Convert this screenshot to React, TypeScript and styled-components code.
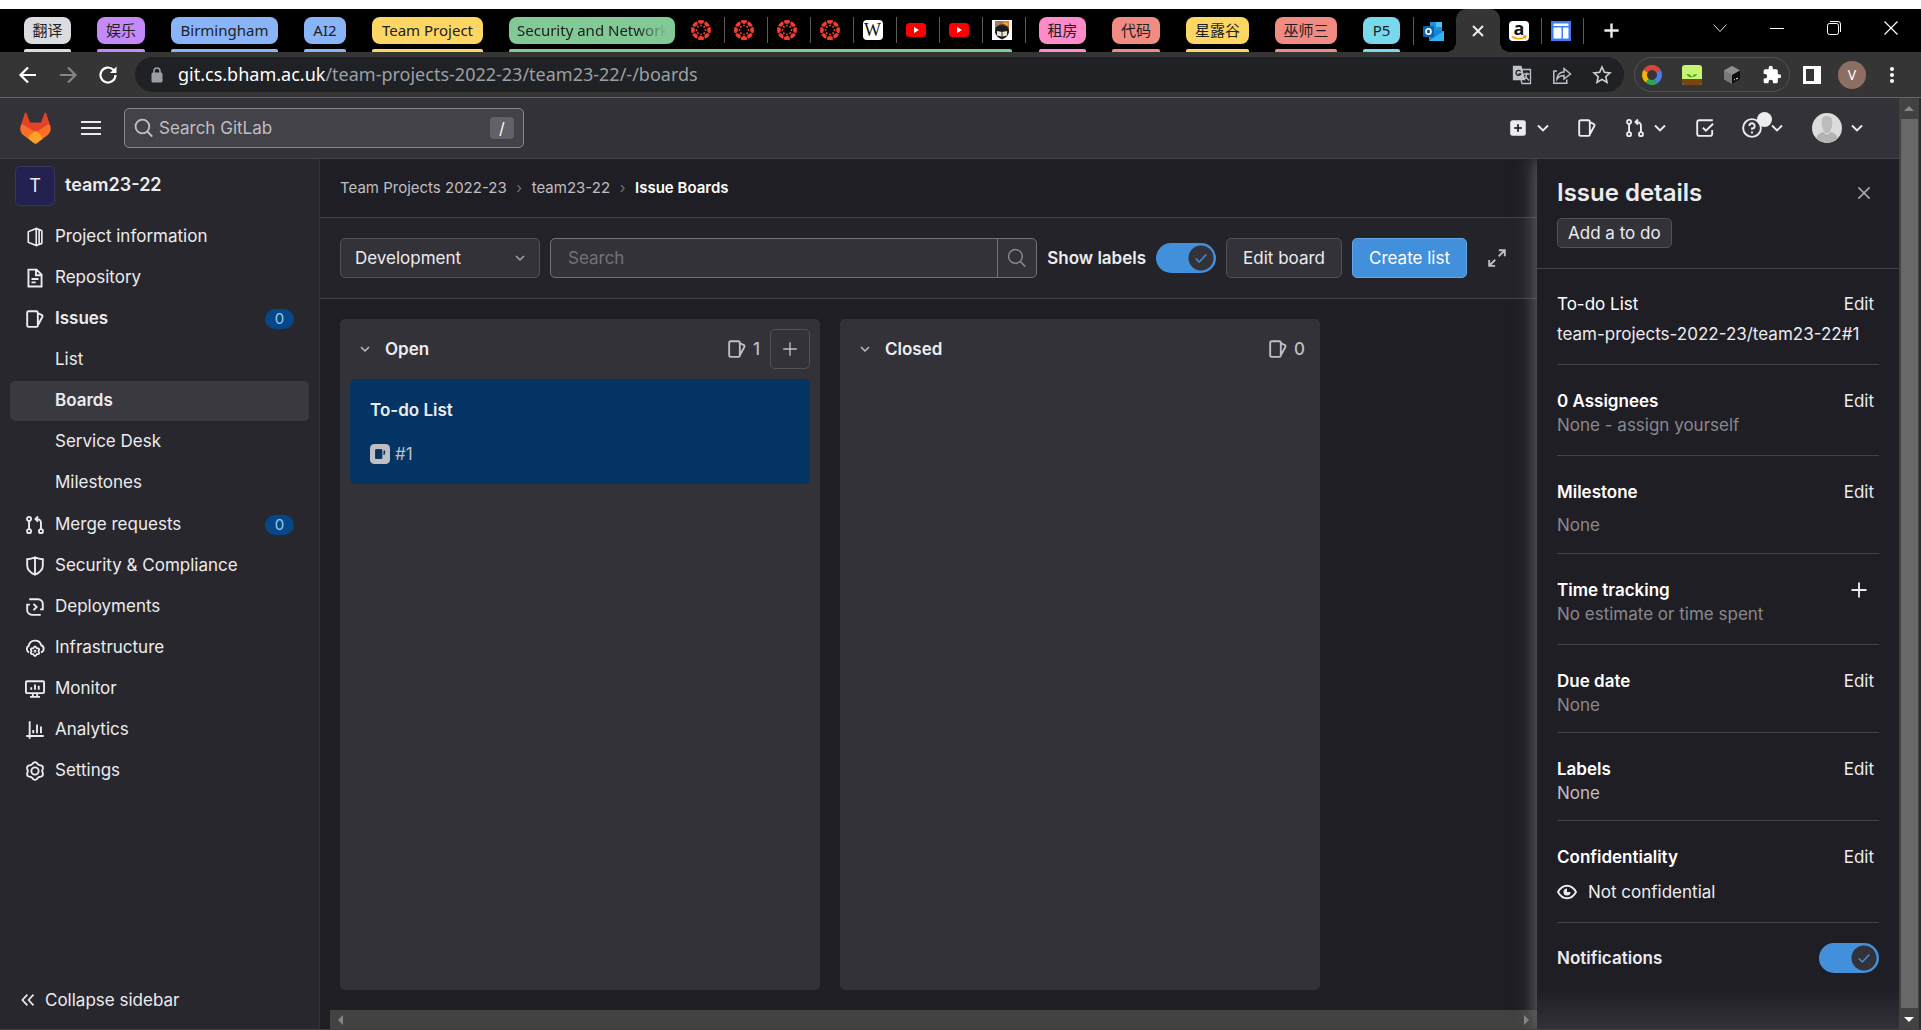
import React from "react";
import styled, { createGlobalStyle, css } from "styled-components";

const GlobalStyle = createGlobalStyle`
  *, *::before, *::after { box-sizing: border-box; }
  body { margin: 0; background: #1f1e24; }
  button, input, select { font: inherit; color: inherit; margin: 0; }
  button { border: 0; background: none; padding: 0; cursor: pointer; }
  a { color: inherit; text-decoration: none; }
  ul, ol { list-style: none; margin: 0; padding: 0; }
  h1, h2, h3, p { margin: 0; font-weight: inherit; font-size: inherit; }
  svg { display: block; flex: none; }
`;

const uiFont = `"Noto Sans", "Noto Sans CJK SC", sans-serif`;
const appFont = `Inter, "Noto Sans", sans-serif`;

const Screen = styled.div`
  display: flex;
  flex-direction: column;
  height: 100vh;
  overflow: hidden;
  color: #ececef;
  font: 17px/24px ${appFont};
  border-top: 9px solid #fff;
  border-bottom: 1px solid #3c4043;
`;

/* ---------- browser ---------- */

const TabStrip = styled.div`
  display: flex;
  height: 43px;
  flex: none;
  padding-left: 24px;
  background: #000;
  font: 15px/27px ${uiFont};
`;

const GroupList = styled.div<{ $offset?: number }>`
  display: flex;
  gap: 26px;
  margin-left: ${(p) => p.$offset ?? 0}px;
`;

const Group = styled.div`
  display: flex;
  flex-direction: column;
  justify-content: space-between;
  padding-top: 8px;
`;

const GroupRow = styled.div`
  display: flex;
`;

const GroupChip = styled.button<{ $color: string; $width: number; $fade?: boolean }>`
  width: ${(p) => p.$width}px;
  height: 27px;
  padding: 0 8px;
  border-radius: 8px;
  background: ${(p) => p.$color};
  color: #202124;
  line-height: 27px;
  white-space: nowrap;
  overflow: hidden;
  text-align: ${(p) => (p.$fade ? "left" : "center")};
  span {
    display: block;
    overflow: hidden;
    ${(p) => p.$fade && css`mask-image: linear-gradient(90deg, #000 80%, transparent);`}
  }
`;

const GroupLine = styled.div<{ $color: string; $inset?: number }>`
  height: 3px;
  margin-right: ${(p) => p.$inset ?? 0}px;
  border-radius: 2px 2px 0 0;
  background: ${(p) => p.$color};
`;

const FaviconRow = styled.div`
  display: flex;
  margin-left: 7px;
`;

const FaviconTab = styled.button`
  display: flex;
  align-items: center;
  justify-content: center;
  width: 43px;
  height: 26px;
  padding-right: 5px;
  border-right: 1px solid #5a5a5a;
`;

const LooseTabs = styled.div<{ $first?: boolean }>`
  display: flex;
  padding-top: 9px;
  margin-left: ${(p) => (p.$first ? 13 : 0)}px;
  ${(p) => p.$first && css`border-left: 1px solid #5a5a5a; border-image: linear-gradient(#000 9px, #5a5a5a 9px 35px, #000 35px) 1;`}
`;

const LooseTab = styled.button<{ $line?: boolean }>`
  display: flex;
  align-items: center;
  justify-content: center;
  width: 42px;
  height: 26px;
  padding-right: 3px;
  border-right: 1px solid ${(p) => (p.$line ? "#5a5a5a" : "transparent")};
`;

const ActiveTab = styled.div`
  position: relative;
  display: flex;
  align-items: center;
  justify-content: center;
  width: 44px;
  background: #353535;
  border-radius: 10px 10px 0 0;
  &::before, &::after {
    content: "";
    position: absolute;
    bottom: 0;
    width: 10px;
    height: 10px;
  }
  &::before { right: 100%; background: radial-gradient(circle at 0 0, transparent 10px, #353535 10px); }
  &::after { left: 100%; background: radial-gradient(circle at 100% 0, transparent 10px, #353535 10px); }
`;

const PlainButton = styled.button`
  display: flex;
  align-items: center;
  justify-content: center;
`;

const NewTab = styled(PlainButton)`
  width: 54px;
`;

const WindowControls = styled.div`
  display: flex;
  margin-left: auto;
  padding: 0 2px 6px 0;
  button { width: 57px; }
`;

const Toolbar = styled.div`
  display: flex;
  align-items: center;
  flex: none;
  height: 46px;
  padding: 0 9px 0 8px;
  background: #353535;
  border-bottom: 1px solid #636363;
  font: 18px/24px ${uiFont};
`;

const ToolButton = styled(PlainButton)`
  width: 40px;
  height: 35px;
`;

const AddressBar = styled.div`
  display: flex;
  align-items: center;
  flex: 1;
  height: 35px;
  margin-left: 7px;
  padding: 0 2px 0 15px;
  border-radius: 18px;
  background: #202124;
  color: #9aa0a6;
`;

const Url = styled.div`
  flex: 1;
  margin-left: 14px;
  padding-bottom: 2px;
  b { color: #fff; font-weight: 400; }
`;

const ExtensionPill = styled.div`
  display: flex;
  align-items: center;
  gap: 6px;
  height: 35px;
  margin: 0 2px 0 10px;
  border: 1px solid #505050;
  border-radius: 18px;
  button { width: 34px; }
`;

const ProfileBubble = styled.span`
  width: 28px;
  height: 28px;
  border-radius: 50%;
  background: #8d6e63;
  color: #fff;
  font-size: 14px;
  line-height: 28px;
  text-align: center;
`;

/* ---------- GitLab shell ---------- */

const Viewport = styled.div`
  display: flex;
  flex: 1;
  min-height: 0;
`;

const Page = styled.div`
  display: flex;
  flex-direction: column;
  flex: 1;
  min-width: 0;
`;

const TopNav = styled.header`
  display: flex;
  align-items: center;
  flex: none;
  z-index: 2;
  height: 61px;
  padding: 0 32px 0 17px;
  background: #333238;
  border-bottom: 1px solid #434248;
`;

const MenuButton = styled(PlainButton)`
  width: 40px;
  height: 40px;
  margin: 0 13px 0 17px;
`;

const GlobalSearch = styled.label`
  display: flex;
  align-items: center;
  gap: 5px;
  width: 400px;
  height: 40px;
  padding: 0 9px;
  border: 1px solid #89888d;
  border-radius: 5px;
  background: #434248;
  color: #bfbfc3;
  input {
    flex: 1;
    min-width: 0;
    padding: 0;
    border: 0;
    outline: 0;
    background: none;
    &::placeholder { color: #bfbfc3; opacity: 1; }
  }
  kbd {
    width: 24px;
    height: 22px;
    border-radius: 4px;
    background: #626168;
    color: #fff;
    font: 16px/22px ${appFont};
    text-align: center;
  }
`;

const NavActions = styled.nav`
  display: flex;
  align-items: center;
  margin-left: auto;
`;

const NavAction = styled(PlainButton)<{ $gap: number }>`
  gap: 5px;
  height: 40px;
  margin-left: ${(p) => p.$gap}px;
`;

const HelpIcon = styled.span`
  position: relative;
  &::after {
    content: "";
    position: absolute;
    top: -6px;
    right: -10px;
    width: 15px;
    height: 15px;
    border-radius: 50%;
    background: #ececef;
  }
`;

const Body = styled.div`
  display: flex;
  flex: 1;
  min-height: 0;
`;

const Sidebar = styled.aside`
  display: flex;
  flex-direction: column;
  flex: none;
  width: 320px;
  padding: 7px 10px 9px;
  background: #28272d;
  border-right: 1px solid #333238;
`;

const Project = styled.a`
  display: flex;
  gap: 10px;
  padding-left: 5px;
  margin-bottom: 11px;
  font-size: 18px;
  line-height: 37px;
  font-weight: 600;
`;

const ProjectAvatar = styled.span`
  width: 40px;
  height: 40px;
  border: 1px solid #39365c;
  border-radius: 5px;
  background: #232150;
  font-size: 18px;
  font-weight: 400;
  line-height: 38px;
  text-align: center;
`;

const NavItem = styled.li<{ $gapAfter?: boolean }>`
  margin-bottom: ${(p) => (p.$gapAfter ? 2 : 1)}px;
`;

const SubItem = styled.li`
  margin-top: 1px;
`;

const NavLink = styled.a<{ $bold?: boolean; $active?: boolean; $sub?: boolean }>`
  display: flex;
  align-items: center;
  gap: 10px;
  height: 40px;
  padding: 0 15px ${(p) => (p.$sub ? "0 45px" : "0 15px")};
  border-radius: 5px;
  background: ${(p) => (p.$active ? "#3a393f" : "none")};
  font-weight: ${(p) => (p.$bold ? 600 : 400)};
  span { padding-bottom: 2px; }
`;

const Count = styled.em`
  width: 29px;
  height: 20px;
  margin-left: auto;
  border-radius: 10px;
  background: #064787;
  color: #9dc7f1;
  font: 400 15px/20px ${appFont};
  text-align: center;
`;

const Collapse = styled.button`
  display: flex;
  align-items: center;
  gap: 8px;
  height: 40px;
  margin-top: auto;
  padding-left: 9px;
`;

const Main = styled.main`
  display: flex;
  flex-direction: column;
  flex: 1;
  min-width: 0;
`;

const Breadcrumbs = styled.ol`
  display: flex;
  align-items: center;
  height: 59px;
  flex: none;
  padding-left: 20px;
  border-bottom: 1px solid #434248;
  color: #bfbfc3;
  font-size: 15px;
  li { display: flex; align-items: center; }
  li + li::before { content: "›"; width: 25px; text-align: center; color: #737278; }
  li:last-child { color: #fff; font-weight: 600; }
  li:last-child::before { font-weight: 400; }
`;

const BoardBar = styled.div`
  display: flex;
  align-items: center;
  gap: 10px;
  height: 81px;
  flex: none;
  padding: 0 20px;
  background: #24232a;
  border-bottom: 1px solid #434248;
`;

const BoardSelect = styled.div`
  display: grid;
  align-items: center;
  width: 200px;
  height: 40px;
  select, svg { grid-area: 1 / 1; }
  select {
    appearance: none;
    width: 100%;
    height: 40px;
    padding: 0 14px;
    border: 1px solid #535158;
    border-radius: 5px;
    background: #333238;
  }
  svg { justify-self: end; margin-right: 12px; pointer-events: none; color: #a4a3a8; }
`;

const FilterSearch = styled.form`
  display: flex;
  flex: 1;
  height: 40px;
  border: 1px solid #737278;
  border-radius: 5px;
  background: #333238;
  overflow: hidden;
  input {
    flex: 1;
    min-width: 0;
    padding: 0 17px;
    border: 0;
    outline: 0;
    background: none;
    &::placeholder { color: #737278; opacity: 1; }
  }
  button { width: 39px; border-left: 1px solid #737278; color: #89888d; }
`;

const ToggleLabel = styled.label`
  display: flex;
  align-items: center;
  gap: 10px;
  flex: none;
  font-weight: 600;
`;

const Switch = styled.span`
  display: grid;
  input, svg { grid-area: 1 / 1; }
  input {
    appearance: none;
    width: 60px;
    height: 30px;
    border-radius: 15px;
    background: radial-gradient(circle at 45px 15px, #333238 12px, #428fdc 13px);
  }
  svg { place-self: center end; margin-right: 7px; pointer-events: none; color: #428fdc; }
`;

const BarButton = styled.button<{ $primary?: boolean }>`
  height: 40px;
  flex: none;
  padding: 0 16px;
  border: 1px solid ${(p) => (p.$primary ? "#63a6e9" : "#535158")};
  border-radius: 5px;
  background: ${(p) => (p.$primary ? "#428fdc" : "#333238")};
  color: ${(p) => (p.$primary ? "#fff" : "#ececef")};
`;

const ExpandButton = styled(PlainButton)`
  width: 40px;
  height: 40px;
  color: #bfbfc3;
`;

const Columns = styled.div`
  display: flex;
  flex: 1;
  gap: 20px;
  min-height: 0;
  padding: 20px;
`;

const Column = styled.section`
  width: 480px;
  flex: none;
  padding: 0 10px;
  border-radius: 5px;
  background: #333238;
`;

const ColumnHead = styled.header`
  display: flex;
  align-items: center;
  height: 60px;
  padding-left: 7px;
  color: #bfbfc3;
  h2 { flex: 1; margin-left: 12px; font-weight: 600; color: #ececef; }
`;

const IssueCount = styled.span<{ $pad: number }>`
  display: flex;
  align-items: center;
  gap: 6px;
  padding-right: ${(p) => p.$pad}px;
  font-weight: 500;
`;

const AddCard = styled(PlainButton)`
  width: 40px;
  height: 40px;
  border: 1px solid #535158;
  border-radius: 5px;
`;

const Card = styled.article`
  height: 105px;
  padding: 19px 20px;
  border-radius: 5px;
  background: #033464;
  h3 { font-weight: 600; }
  p { display: flex; align-items: center; gap: 5px; margin-top: 20px; color: #bfbfc3; }
`;

const HorizontalBar = styled.div`
  display: flex;
  align-items: center;
  justify-content: space-between;
  flex: none;
  height: 19px;
  margin-left: 10px;
  padding: 0 7px;
  background: #424242;
  color: #868686;
`;

const VerticalBar = styled.div`
  display: flex;
  flex-direction: column;
  align-items: center;
  z-index: 3;
  width: 22px;
  flex: none;
  background: #424242;
  border-right: 2px solid #2b2b2d;
  color: #868686;
  i { width: 17px; flex: 1; background: #686868; }
  svg { margin: 6px 0 5px; }
`;

const Drawer = styled.aside`
  position: relative;
  z-index: 1;
  width: 362px;
  flex: none;
  padding: 0 20px;
  background: linear-gradient(#1f1e24 calc(100% - 40px), #333238);
  box-shadow: 0 0 18px #737278;
`;

const DrawerHead = styled.header`
  height: 110px;
  margin: 0 -20px;
  padding: 20px 20px 0;
  border-bottom: 1px solid #434248;
`;

const DrawerTitle = styled.div`
  display: flex;
  align-items: center;
  justify-content: space-between;
  height: 28px;
  padding-right: 6px;
  h2 { font-size: 24px; font-weight: 600; }
  button { color: #a4a3a8; }
`;

const SmallButton = styled.button`
  height: 30px;
  margin-top: 11px;
  padding: 0 10px;
  border: 1px solid #535158;
  border-radius: 5px;
  background: #333238;
`;

const Field = styled.section<{ $gap?: number; $bottom?: number; $plain?: boolean }>`
  padding: ${(p) => (p.$plain ? 23 : 24)}px 0 ${(p) => p.$bottom ?? 18}px;
  border-bottom: 1px solid #434248;
  header {
    display: flex;
    justify-content: space-between;
    padding-right: 5px;
    margin-bottom: ${(p) => p.$gap ?? 0}px;
  }
  h3 { font-weight: ${(p) => (p.$plain ? 400 : 600)}; color: #fff; }
`;

const Value = styled.p<{ $tone?: "light" | "mid" }>`
  display: flex;
  align-items: center;
  gap: 11px;
  white-space: nowrap;
  color: ${(p) => (p.$tone === "light" ? "#ececef" : p.$tone === "mid" ? "#bfbfc3" : "#89888d")};
`;

const IconAction = styled(PlainButton)`
  margin-right: 5px;
`;

const Notifications = styled.label`
  display: flex;
  align-items: center;
  justify-content: space-between;
  padding-top: 20px;
  font-weight: 600;
`;

/* ---------- icons ---------- */

const gear = (cx: number, cy: number, r: number, depth: number) =>
  Array.from({ length: 72 }, (_, i) => {
    const a = (i / 72) * Math.PI * 2;
    const d = r + depth * Math.cos(6 * (a + Math.PI / 2));
    return `${i ? "L" : "M"}${(cx + d * Math.cos(a)).toFixed(2)} ${(cy + d * Math.sin(a)).toFixed(2)}`;
  }).join("") + "Z";

const lines: Record<string, React.ReactNode> = {
  project: <path d="M9 1.200 3 3.600a.6.6 0 0 0-.4.6v7.600c0 .3.1.5.4.6l6 2.400zM9 1.200l4 1.500c.3.1.5.3.5.6v9.400c0 .3-.2.5-.5.6l-4 1.500M11.300 2.400v11.200" strokeWidth="1.300" />,
  doc: <path d="M2.750 1.250h6.500l4 4v9.500H2.750zM8.750 1.500v4.250H13M5.200 8.750h5.600M5.200 11.500h3.400" />,
  issues: <path d="M3 1.750h6c.7 0 1.250.55 1.250 1.250v10c0 .7-.55 1.250-1.250 1.250H3c-.7 0-1.250-.55-1.250-1.250V3c0-.7.55-1.250 1.250-1.250zM10.600 3.400l2.900 1.500c.5.25.7.8.45 1.300L10.400 12.800" />,
  merge: <path d="M3.250 4.750v6.500M12.750 11.250V6A2.750 2.750 0 0 0 10 3.250H8.600M10.400 1.200 8.400 3.250l2 2.050M3.250 1.500a1.600 1.600 0 1 0 0 3.200 1.600 1.600 0 0 0 0-3.200zM3.250 11.300a1.600 1.600 0 1 0 0 3.200 1.600 1.600 0 0 0 0-3.200zM12.750 11.300a1.600 1.600 0 1 0 0 3.200 1.600 1.600 0 0 0 0-3.200z" />,
  shield: <path d="M8 1c2 1 4 1.500 6.250 1.600V7.500c0 3-2.200 5.600-6.250 7.500-4.050-1.900-6.250-4.500-6.250-7.500V2.600C4 2.500 6 2 8 1zM8 1.200V14.600" />,
  deploy: <path d="M3.400 1.750h7.100a3.750 3.750 0 0 1 3.750 3.750v4.400h-2.200M12.600 14.250H5.500a3.750 3.750 0 0 1-3.750-3.750V6.100h2.200M6.800 5.500 9.300 8l-2.500 2.500" />,
  cloud: <><path d="M3.300 11.500A2.900 2.900 0 0 1 2.900 6.300 5.200 5.200 0 0 1 13 5.800a3 3 0 0 1-.3 5.700" /><path d={gear(8, 10.600, 3.300, 0.45)} strokeWidth="1.400" /><circle cx="8" cy="10.600" r=".4" /></>,
  monitor: <path d="M1.600 1.750h12.800c.5 0 .85.35.85.85v7.800c0 .5-.35.85-.85.85H1.600c-.5 0-.85-.35-.85-.85V2.600c0-.5.35-.85.85-.85zM6.250 11.500v2.600M9.750 11.500v2.600M4 14.250h8M5 6.600v2M8 4.400v4.200M11 5.400v3.200" />,
  chart: <path d="M3.750.9v14M1 12.750h14M6.600 8v2.600M9.600 3.600v7M12.750 5.200v5.400" />,
  settings: <><path d={gear(8, 8, 6.400, 0.65)} /><circle cx="8" cy="8" r="2.900" /></>,
  collapse: <path d="M7.400 3.200 3 8l4.400 4.800M12.900 3.200 8.500 8l4.400 4.800" />,
  chevron: <path d="m4 6 4 4 4-4" />,
  search: <path d="M6.750 1.250a5.500 5.500 0 1 0 0 11 5.500 5.500 0 0 0 0-11zM10.900 11l3.700 3.900" />,
  plus: <path d="M8 2v12M2 8h12" />,
  close: <path d="m3 3 10 10M13 3 3 13" />,
  check: <path d="M2.800 8.400 6.300 12l7-7.600" />,
  expand: <path d="M9.500 1.750h4.750V6.500M14 2 9.400 6.600M6.500 14.250H1.750V9.500M2 14l4.600-4.600" />,
  todo: <path d="M13.750 9.500v3c0 1-.75 1.750-1.750 1.750H3.500c-1 0-1.750-.75-1.750-1.750v-9c0-1 .75-1.750 1.750-1.750h10.750M6.300 7.800 8.700 10.200l5.800-5.600" />,
  help: <><circle cx="8" cy="8" r="7.100" /><path d="M5.900 6.300A2.100 2.100 0 1 1 8 8.400v1M8 10.800v1.500" /></>,
  eye: <><path d="M.8 8C2.600 4.700 5 3 8 3s5.400 1.700 7.200 5c-1.800 3.300-4.200 5-7.200 5S2.600 11.300.8 8z" /><path d="M8 5.200A2.800 2.800 0 1 0 10.800 8H8z" fill="currentColor" stroke="none" /></>,
};

const Icon = ({ name, size = 20, width = 1.5 }: { name: string; size?: number; width?: number }) => (
  <svg width={size} height={size} viewBox="0 0 16 16" fill="none" stroke="currentColor" strokeWidth={width} aria-hidden="true">
    {lines[name]}
  </svg>
);

const Triangle = ({ d, color = "currentColor" }: { d: string; color?: string }) => (
  <svg width="10" height="10" viewBox="0 0 10 10" fill={color} aria-hidden="true"><path d={d} /></svg>
);

const CanvasMark = () => (
  <svg width="20" height="20" viewBox="0 0 20 20">
    {Array.from({ length: 8 }, (_, i) => (
      <g key={i} transform={`rotate(${i * 45} 10 10)`} fill="#f03e2f">
        <path d="M6.900 .6a10 10 0 0 1 6.200 0 3.100 3.300 0 0 1-6.200 0z" />
        <circle cx="10" cy="5.500" r="1" />
      </g>
    ))}
  </svg>
);

const LetterMark = styled.span<{ $serif?: boolean }>`
  width: 20px;
  height: 20px;
  border-radius: 4px;
  background: #fff;
  color: #111;
  text-align: center;
  font: ${(p) => (p.$serif ? `400 18px/20px "Liberation Serif", serif` : `700 18px/14px "Open Sans", sans-serif`)};
`;

const AmazonTab = styled.span`
  display: grid;
  & > * { grid-area: 1 / 1; }
`;

const Youtube = () => (
  <svg width="20" height="20" viewBox="0 0 20 20"><rect y="3" width="20" height="14" rx="3.500" fill="#f00" /><path d="M8 7v6l5-3z" fill="#fff" /></svg>
);

const Crest = () => (
  <svg width="20" height="20" viewBox="0 0 20 20">
    <path d="M0 0h20v20H0z" fill="#fff" />
    <path d="M3 1h7v12H3z" fill="#2d7bb8" /><path d="M10 1h7v12h-7z" fill="#e4572e" />
    <path d="M4 2.500l3 2-2 3 3 2" stroke="#e4572e" strokeWidth="1.800" fill="none" /><path d="M12 2.500l3 1.500-2 3 2 2" stroke="#f2c230" strokeWidth="1.600" fill="none" />
    <path d="M3 11a7 7 0 0 1 14 0c0 4-3 7-7 8.500C6 18 3 15 3 11z" fill="#1e1c1c" /><path d="M5 11l5 1 5-1v4.500l-5 1-5-1z" fill="#eee4d2" /><path d="M10 12v4.500" stroke="#333" />
    <path d="M3 1h14v6l-7-2-7 2z" fill="#e9a13b" fillOpacity=".35" />
  </svg>
);

const Outlook = () => (
  <svg width="21" height="21" viewBox="0 0 21 21">
    <path d="M7 1h12v9H7z" fill="#1f8fdc" /><path d="M13 1h6v5h-6z" fill="#50c0f5" /><path d="M6 9l15 1v10H6z" fill="#1686d9" /><path d="M6 20l15-10v10z" fill="#35b2f0" />
    <rect y="5" width="11" height="11" rx="1" fill="#0a64ad" /><ellipse cx="5.500" cy="10.500" rx="2.500" ry="2.800" fill="none" stroke="#fff" strokeWidth="1.600" />
  </svg>
);

const PageMark = () => (
  <svg width="20" height="20" viewBox="0 0 20 20"><path d="M0 0h20v20H0z" fill="#3f7cf3" /><path d="M2.500 2.500h15v2.500h-15zM2.500 6.500h8V17.500h-8zM12 6.500h5.500V17.500H12z" fill="#fff" /></svg>
);

const Tanuki = () => (
  <svg width="37" height="32" viewBox="0 0 37 32">
    <path d="M7.800 1.200 4 13l14.500 17L33 13 29.200 1.200c-.3-.8-1.400-.8-1.700 0L24 10.500H13L9.500 1.200c-.3-.8-1.400-.8-1.700 0z" fill="#e24329" />
    <path d="M4 13c-1.600 4-.5 8 2.800 10.500l4.700 3.600 7-6.600L6.500 12.800C5.500 12.200 4.300 12.300 4 13zM33 13c1.600 4 .5 8-2.800 10.500l-4.700 3.600-7-6.600 12-7.700c1-.6 2.200-.5 2.500.2z" fill="#fc6d26" />
    <path d="M18.500 18.800l-6 4.600-1 3.700 5.200 4c1.100.9 2.500.9 3.600 0l5.200-4-1-3.700z" fill="#fca326" />
  </svg>
);

const Reload = () => (
  <svg width="20" height="20" viewBox="0 0 20 20" fill="none" stroke="#fff" strokeWidth="2.200"><path d="M17.500 10a7.500 7.500 0 1 1-2.200-5.300L17 6.500" /><path d="M18.500 1.500v6.500H12z" fill="#fff" stroke="none" /></svg>
);

const Arrow = ({ flip }: { flip?: boolean }) => (
  <svg width="20" height="20" viewBox="0 0 20 20" fill="none" stroke={flip ? "#858585" : "#fff"} strokeWidth="2.200">
    <path d={flip ? "M2 10h15M10 2.500l7.500 7.500-7.500 7.500" : "M18 10H3M10 2.500 2.500 10l7.500 7.500"} />
  </svg>
);

const Avatar = () => (
  <svg width="30" height="30" viewBox="0 0 30 30">
    <circle cx="15" cy="15" r="15" fill="#dcdcdc" />
    <path d="M4.500 25.500c.5-4 3-5 6-6.500h9c3 1.500 5.500 2.500 6 6.500a15 15 0 0 1-21 0z" fill="#b3b3b3" />
    <path d="M15 2.500c4 0 6 2.500 6 7 0 5-2.500 11.500-6 11.500S9 14.500 9 9.500c0-4.500 2-7 6-7z" fill="#bcbcbc" stroke="#e6e6e6" />
  </svg>
);

/* ---------- data ---------- */

const leftGroups = [
  { label: "翻译", color: "#dadce0", width: 47 },
  { label: "娱乐", color: "#c58af9", width: 48 },
  { label: "Birmingham", color: "#8ab4f8", width: 107 },
  { label: "AI2", color: "#8ab4f8", width: 42 },
  { label: "Team Project", color: "#fdd663", width: 111 },
];

const rightGroups = [
  { label: "租房", color: "#ff8bcb", width: 47 },
  { label: "代码", color: "#f28b82", width: 48 },
  { label: "星露谷", color: "#fdd663", width: 63 },
  { label: "巫师三", color: "#f28b82", width: 62 },
  { label: "P5", color: "#78d9ec", width: 37 },
];

const sideItems = [
  { icon: "project", label: "Project information" },
  { icon: "doc", label: "Repository" },
  { icon: "issues", label: "Issues", bold: true, count: 0, sub: ["List", "Boards", "Service Desk", "Milestones"] },
  { icon: "merge", label: "Merge requests", count: 0 },
  { icon: "shield", label: "Security & Compliance" },
  { icon: "deploy", label: "Deployments" },
  { icon: "cloud", label: "Infrastructure" },
  { icon: "monitor", label: "Monitor" },
  { icon: "chart", label: "Analytics" },
  { icon: "settings", label: "Settings" },
];

const fields: { title: string; value: string; gap?: number; bottom?: number; plain?: boolean; tone?: "light" | "mid"; icon?: string; add?: boolean }[] = [
  { title: "To-do List", value: "team-projects-2022-23/team23-22#1", gap: 6, plain: true, tone: "light" },
  { title: "0 Assignees", value: "None - assign yourself" },
  { title: "Milestone", value: "None", gap: 9, bottom: 16 },
  { title: "Time tracking", value: "No estimate or time spent", add: true },
  { title: "Due date", value: "None", bottom: 15 },
  { title: "Labels", value: "None", bottom: 15, tone: "mid" },
  { title: "Confidentiality", value: "Not confidential", gap: 11, tone: "light", icon: "eye" },
];

/* ---------- parts ---------- */

const TabGroup = ({ label, color, width }: { label: string; color: string; width: number }) => (
  <Group>
    <GroupChip $color={color} $width={width}><span>{label}</span></GroupChip>
    <GroupLine $color={color} />
  </Group>
);

const Browser = () => (
  <>
    <TabStrip>
      <GroupList>
        {leftGroups.map((g) => <TabGroup key={g.label} {...g} />)}
        <Group>
          <GroupRow>
            <GroupChip $color="#81c995" $width={166} $fade><span>Security and Network</span></GroupChip>
            <FaviconRow>
              {[0, 1, 2, 3].map((i) => <FaviconTab key={i} aria-label="Canvas"><CanvasMark /></FaviconTab>)}
              <FaviconTab><LetterMark $serif>W</LetterMark></FaviconTab>
              <FaviconTab aria-label="YouTube"><Youtube /></FaviconTab>
              <FaviconTab aria-label="YouTube"><Youtube /></FaviconTab>
              <FaviconTab aria-label="University"><Crest /></FaviconTab>
            </FaviconRow>
          </GroupRow>
          <GroupLine $color="#81c995" $inset={14} />
        </Group>
      </GroupList>
      <GroupList $offset={13}>
        {rightGroups.map((g) => <TabGroup key={g.label} {...g} />)}
      </GroupList>
      <LooseTabs $first><LooseTab aria-label="Outlook"><Outlook /></LooseTab></LooseTabs>
      <ActiveTab><PlainButton aria-label="Close tab"><Icon name="close" size={16} width={2} /></PlainButton></ActiveTab>
      <LooseTabs>
        <LooseTab $line>
          <AmazonTab>
            <LetterMark>a</LetterMark>
            <svg width="20" height="20" viewBox="0 0 20 20" fill="none" stroke="#f90" strokeWidth="1.600"><path d="M3 15.500c4 3 9.500 3 13.500.3M14 15l2.900.2-.8 2.300" /></svg>
          </AmazonTab>
        </LooseTab>
        <LooseTab $line aria-label="Planner"><PageMark /></LooseTab>
      </LooseTabs>
      <NewTab aria-label="New tab"><Icon name="plus" size={19} width={2} /></NewTab>
      <WindowControls>
        <PlainButton aria-label="Search tabs"><svg width="14" height="10" viewBox="0 0 14 10" fill="none" stroke="#ddd"><path d="m.5 1.500 6.500 7 6.500-7" /></svg></PlainButton>
        <PlainButton aria-label="Minimize"><svg width="14" height="10" viewBox="0 0 14 10" stroke="#fff"><path d="M0 5.500h14" /></svg></PlainButton>
        <PlainButton aria-label="Restore"><svg width="14" height="14" viewBox="0 0 14 14" fill="none" stroke="#fff"><rect x=".5" y="2.500" width="11" height="11" rx="2" /><path d="M3 .5h8a2.500 2.500 0 0 1 2.500 2.500v8" /></svg></PlainButton>
        <PlainButton aria-label="Close"><svg width="14" height="14" viewBox="0 0 14 14" stroke="#fff" strokeWidth="1.200"><path d="m.5.5 13 13M13.500.5l-13 13" /></svg></PlainButton>
      </WindowControls>
    </TabStrip>
    <Toolbar>
      <ToolButton aria-label="Back"><Arrow /></ToolButton>
      <ToolButton aria-label="Forward"><Arrow flip /></ToolButton>
      <ToolButton aria-label="Reload"><Reload /></ToolButton>
      <AddressBar>
        <svg width="14" height="16" viewBox="0 0 14 16"><rect x="1.500" y="5.500" width="11" height="10" rx="1.500" fill="#9aa0a6" /><path d="M4 6V4a3 3 0 0 1 6 0v2" fill="none" stroke="#9aa0a6" strokeWidth="1.600" /></svg>
        <Url role="textbox" aria-label="Address"><b>git.cs.bham.ac.uk</b>/team-projects-2022-23/team23-22/-/boards</Url>
        <ToolButton aria-label="Translate"><svg width="20" height="20" viewBox="0 0 20 20" fill="none" stroke="#bdc1c6" strokeWidth="1.300"><path d="M1.500 1.500h7.500l3.500 13h-11z" fill="#bdc1c6" /><path d="M10 4.500h8.500v14h-8.500l-1-3.500M12 9h5.500M14.800 7.500v1.500c-.2 2-1 4-2.500 5.500M13 11l4 4.500" /><path d="M8.600 6.500a2.500 2.500 0 1 0 .2 2.300H6.500" stroke="#202124" /></svg></ToolButton>
        <ToolButton aria-label="Share"><svg width="20" height="20" viewBox="0 0 20 20" fill="none" stroke="#bdc1c6" strokeWidth="1.500"><path d="M5 6H1.800v12.200h13V14.500M5 14c.5-5 3.500-7 7-7V3.500L18.500 9l-6.500 5V10.500c-3 0-5 .8-7 3.500z" /></svg></ToolButton>
        <ToolButton aria-label="Bookmark"><svg width="20" height="20" viewBox="0 0 20 20" fill="none" stroke="#d0d3d6" strokeWidth="1.600"><path d="m10 2 2.400 5.300 5.600.6-4.200 3.800 1.200 5.700-5-3-5 3 1.200-5.700L2 7.900l5.600-.6z" /></svg></ToolButton>
      </AddressBar>
      <ExtensionPill>
        <ToolButton aria-label="Extension"><svg width="20" height="20" viewBox="0 0 20 20" fill="none" strokeWidth="5"><path d="M3.500 6.300a7.500 7.500 0 0 1 13 0" stroke="#db4437" /><path d="M16.500 6.300A7.500 7.500 0 0 1 13.700 16.500" stroke="#4a80e0" /><path d="M13.700 16.500a7.500 7.500 0 0 1-8.500-.8" stroke="#2fa35a" /><path d="M5.200 15.700A7.500 7.500 0 0 1 3.500 6.300" stroke="#f4b400" /></svg></ToolButton>
        <ToolButton aria-label="Extension"><svg width="20" height="20" viewBox="0 0 20 20"><rect width="20" height="20" rx="3" fill="#c6f56f" /><path d="M0 14h20v3a3 3 0 0 1-3 3H3a3 3 0 0 1-3-3z" fill="#7a4510" /><path d="M10 12.500C9 10 7.500 9 4.500 9c1 2.500 3 3.500 5.500 3.500zm0-.5c.8-2 2.500-3 5-3-.5 2-2.500 3-5 3z" fill="#4b9c22" /></svg></ToolButton>
        <ToolButton aria-label="Extension"><svg width="20" height="20" viewBox="0 0 20 20"><path d="m10 1 8 4.500v9L10 19l-8-4.500v-9z" fill="#7a7a7a" /><path d="m10 1 8 4.500-8 4.500-8-4.500z" fill="#8e8e8e" /><path d="m10 10 8-4.500v9L10 19z" fill="#0c0c0c" /><path d="m12 14.500 1 .5M14 14l2-1" stroke="#fff" /></svg></ToolButton>
        <ToolButton aria-label="Extensions"><svg width="20" height="20" viewBox="0 0 24 24" fill="#fff"><path d="M20.500 11H19V7a2 2 0 0 0-2-2h-4V3.500a2.500 2.500 0 0 0-5 0V5H4a2 2 0 0 0-2 2v3.800h1.500a2.700 2.700 0 0 1 0 5.400H2V20c0 1.100.9 2 2 2h3.800v-1.500a2.700 2.700 0 0 1 5.400 0V22H17a2 2 0 0 0 2-2v-4h1.500a2.500 2.500 0 0 0 0-5z" /></svg></ToolButton>
      </ExtensionPill>
      <ToolButton aria-label="Side panel"><svg width="18" height="18" viewBox="0 0 18 18"><path d="M0 0h18v18H0zM3 3v12h8V3z" fill="#fff" fillRule="evenodd" /></svg></ToolButton>
      <ToolButton><ProfileBubble>V</ProfileBubble></ToolButton>
      <ToolButton aria-label="Menu"><svg width="4" height="16" viewBox="0 0 4 16" fill="#fff"><circle cx="2" cy="2" r="2" /><circle cx="2" cy="8" r="2" /><circle cx="2" cy="14" r="2" /></svg></ToolButton>
    </Toolbar>
  </>
);

const Toggle = ({ label }: { label: string }) => (
  <Switch>
    <input type="checkbox" defaultChecked aria-label={label} />
    <Icon name="check" size={16} />
  </Switch>
);

const TopBar = () => (
  <TopNav>
    <a href="#home" aria-label="GitLab"><Tanuki /></a>
    <MenuButton aria-label="Menu"><svg width="20" height="14" viewBox="0 0 20 14" stroke="#ececef" strokeWidth="2"><path d="M0 1h20M0 7h20M0 13h20" /></svg></MenuButton>
    <GlobalSearch>
      <Icon name="search" />
      <input type="text" placeholder="Search GitLab" aria-label="Search GitLab" />
      <kbd>/</kbd>
    </GlobalSearch>
    <NavActions>
      <NavAction $gap={0} aria-label="Create new"><svg width="20" height="20" viewBox="0 0 16 16"><rect x="1.750" y="1.750" width="12.500" height="12.500" rx="2" fill="#ececef" /><path d="M8 5v6M5 8h6" stroke="#333238" strokeWidth="1.600" /></svg><Icon name="chevron" /></NavAction>
      <NavAction $gap={24} aria-label="Issues"><Icon name="issues" /></NavAction>
      <NavAction $gap={28} aria-label="Merge requests"><Icon name="merge" /><Icon name="chevron" /></NavAction>
      <NavAction $gap={25} aria-label="To-do"><Icon name="todo" /></NavAction>
      <NavAction $gap={27} aria-label="Help"><HelpIcon><Icon name="help" /></HelpIcon><Icon name="chevron" /></NavAction>
      <NavAction $gap={25} aria-label="Account"><Avatar /><Icon name="chevron" /></NavAction>
    </NavActions>
  </TopNav>
);

const SideNav = () => (
  <Sidebar>
    <Project href="#project"><ProjectAvatar>T</ProjectAvatar>team23-22</Project>
    <ul>
      {sideItems.map((item) => (
        <NavItem key={item.label} $gapAfter={!!item.sub}>
          <NavLink href="#nav" $bold={item.bold}>
            <Icon name={item.icon} /><span>{item.label}</span>
            {item.count !== undefined && <Count>{item.count}</Count>}
          </NavLink>
          {item.sub && (
            <ul>
              {item.sub.map((s) => (
                <SubItem key={s}><NavLink href="#nav" $sub $bold={s === "Boards"} $active={s === "Boards"}><span>{s}</span></NavLink></SubItem>
              ))}
            </ul>
          )}
        </NavItem>
      ))}
    </ul>
    <Collapse><Icon name="collapse" size={18} />Collapse sidebar</Collapse>
  </Sidebar>
);

const Board = () => (
  <Main>
    <Breadcrumbs>
      <li><a href="#group">Team Projects 2022-23</a></li>
      <li><a href="#project">team23-22</a></li>
      <li><a href="#boards">Issue Boards</a></li>
    </Breadcrumbs>
    <BoardBar>
      <BoardSelect>
        <select aria-label="Board"><option>Development</option></select>
        <Icon name="chevron" size={16} />
      </BoardSelect>
      <FilterSearch>
        <input type="text" placeholder="Search" aria-label="Search issues" />
        <PlainButton type="button" aria-label="Search"><Icon name="search" width={1.2} /></PlainButton>
      </FilterSearch>
      <ToggleLabel>Show labels<Toggle label="Show labels" /></ToggleLabel>
      <BarButton>Edit board</BarButton>
      <BarButton $primary>Create list</BarButton>
      <ExpandButton aria-label="Toggle focus mode"><Icon name="expand" /></ExpandButton>
    </BoardBar>
    <Columns>
      <Column>
        <ColumnHead>
          <Icon name="chevron" size={16} />
          <h2>Open</h2>
          <IssueCount $pad={10}><Icon name="issues" />1</IssueCount>
          <AddCard aria-label="New issue"><Icon name="plus" size={18} width={1.2} /></AddCard>
        </ColumnHead>
        <Card>
          <h3><a href="#issue">To-do List</a></h3>
          <p>
            <svg width="20" height="20" viewBox="0 0 16 16"><rect width="16" height="16" rx="3.500" fill="#bfbfc3" /><path d="M4.500 4.500h5v7h-5zM11.200 5.400l.8.500-.8 2.600z" fill="#033464" stroke="#033464" strokeWidth=".8" /></svg>
            #1
          </p>
        </Card>
      </Column>
      <Column>
        <ColumnHead>
          <Icon name="chevron" size={16} />
          <h2>Closed</h2>
          <IssueCount $pad={5}><Icon name="issues" />0</IssueCount>
        </ColumnHead>
      </Column>
    </Columns>
    <HorizontalBar><Triangle d="M6 0v10L1 5z" /><Triangle d="M4 0v10l5-5z" /></HorizontalBar>
  </Main>
);

const Details = () => (
  <Drawer>
    <DrawerHead>
      <DrawerTitle>
        <h2>Issue details</h2>
        <PlainButton aria-label="Close drawer"><Icon name="close" size={18} /></PlainButton>
      </DrawerTitle>
      <SmallButton>Add a to do</SmallButton>
    </DrawerHead>
    {fields.map((f) => (
      <Field key={f.title} $gap={f.gap} $bottom={f.bottom} $plain={f.plain}>
        <header>
          <h3>{f.title}</h3>
          {f.add ? <IconAction aria-label="Add time entry"><Icon name="plus" /></IconAction> : <button>Edit</button>}
        </header>
        <Value $tone={f.tone}>{f.icon && <Icon name={f.icon} />}{f.value}</Value>
      </Field>
    ))}
    <Notifications>Notifications<Toggle label="Notifications" /></Notifications>
  </Drawer>
);

export default function App() {
  return (
    <>
      <GlobalStyle />
      <Screen>
        <Browser />
        <Viewport>
          <Page>
            <TopBar />
            <Body>
              <SideNav />
              <Board />
              <Details />
            </Body>
          </Page>
          <VerticalBar>
            <Triangle d="M0 7h10L5 2z" />
            <i />
            <Triangle d="M0 3h10L5 8z" color="#fff" />
          </VerticalBar>
        </Viewport>
      </Screen>
    </>
  );
}
